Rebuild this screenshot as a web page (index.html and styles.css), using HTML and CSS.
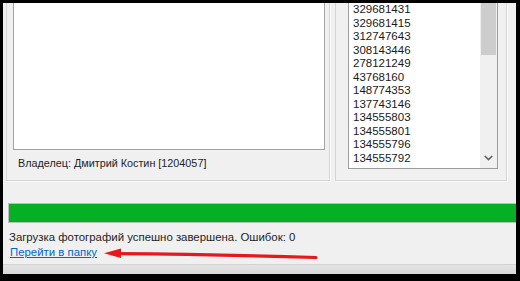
FILE: index.html
```html
<!DOCTYPE html>
<html lang="ru">
<head>
<meta charset="utf-8">
<title>Загрузка фотографий</title>
<link rel="stylesheet" href="styles.css">
</head>
<body>
<div class="screen">
  <div class="window">
    <div class="top">
      <section class="group group-left">
        <div class="textbox"></div>
        <div class="owner">Владелец: Дмитрий Костин [1204057]</div>
      </section>
      <section class="group group-right">
        <div class="listbox">
          <ul class="items">
            <li>329681431</li>
            <li>329681415</li>
            <li>312747643</li>
            <li>308143446</li>
            <li>278121249</li>
            <li>43768160</li>
            <li>148774353</li>
            <li>137743146</li>
            <li>134555803</li>
            <li>134555801</li>
            <li>134555796</li>
            <li>134555792</li>
          </ul>
          <div class="scrollbar">
            <div class="thumb"></div>
            <div class="track"></div>
            <div class="down">
              <svg width="9" height="6" viewBox="0 0 9 6"><path d="M0.8 1 L4.5 4.6 L8.2 1" fill="none" stroke="#606060" stroke-width="1.6"/></svg>
            </div>
          </div>
        </div>
      </section>
    </div>
    <div class="progress"><div class="fill" style="width:100%"></div></div>
    <div class="status">Загрузка фотографий успешно завершена. Ошибок: 0</div>
    <a class="link" href="#">Перейти в папку</a>
    <div class="bottom-edge"></div>
  </div>
  <svg class="arrow" width="520" height="281" viewBox="0 0 520 281">
    <path d="M316 257.5 Q220 254.5 116 253.6" fill="none" stroke="#e4191c" stroke-width="3.2" stroke-linecap="round"/>
    <polygon points="104,253.3 121,248.6 121,258" fill="#e4191c"/>
  </svg>
</div>
</body>
</html>
```
FILE: styles.css
```css
* { box-sizing: border-box; }
html, body { margin: 0; padding: 0; }
body {
  background: #000;
  width: 520px;
  height: 281px;
  overflow: hidden;
  font-family: "Liberation Sans", Arial, sans-serif;
}
.screen {
  position: relative;
  width: 520px;
  height: 281px;
  padding: 3px 4px 7px 3px;
}
.window {
  height: 100%;
  background: #f0f0f0;
  overflow: hidden;
  display: flex;
  flex-direction: column;
}
.top {
  display: flex;
  gap: 5px;
  padding-left: 3px;
  height: 178px;
  flex: none;
}
.group {
  border: 1px solid #d6d6d6;
  border-top: none;
  box-shadow: 1px 1px 0 #fbfbfb;
}
.group-left {
  width: 324px;
  padding: 0 4px 0 6px;
  display: flex;
  flex-direction: column;
}
.textbox {
  height: 147px;
  background: #fff;
  border: 1px solid #a2a2a2;
  border-top: none;
  flex: none;
}
.owner {
  margin: 6px 0 0 5px;
  font-size: 10.8px;
  line-height: 14px;
  color: #1e1e1e;
  white-space: nowrap;
}
.group-right {
  width: 172px;
  padding: 0 8px 0 12px;
}
.listbox {
  height: 166px;
  background: #fff;
  border: 1px solid #9c9c9c;
  border-top: none;
  display: flex;
}
.items {
  flex: 1;
  list-style: none;
  margin: 0;
  padding: 0 0 0 4px;
  font-size: 11.5px;
  line-height: 13.5px;
  color: #1a1a1a;
}
.scrollbar {
  width: 17px;
  background: #f0f0f0;
  display: flex;
  flex-direction: column;
}
.thumb {
  height: 52px;
  margin: 0 1px;
  background: #cdcdcd;
}
.track { flex: 1; }
.down {
  height: 17px;
  display: flex;
  align-items: center;
  justify-content: center;
  padding-bottom: 3px;
}
.progress {
  margin: 22px -20px 0 5px;
  height: 20px;
  border: 1px solid #bcbcbc;
  background: #e6e6e6;
  flex: none;
}
.fill {
  height: 100%;
  background: #06b025;
}
.status {
  margin: 7px 0 0 6px;
  font-size: 11.4px;
  line-height: 15px;
  color: #1e1e1e;
  white-space: nowrap;
}
.link {
  align-self: flex-start;
  margin-left: 7px;
  font-size: 11.4px;
  line-height: 15px;
  color: #0066cc;
  text-decoration: underline;
  white-space: nowrap;
}
.bottom-edge {
  margin-top: auto;
  height: 10px;
  border-top: 1px solid #d2d2d2;
  background: linear-gradient(#e4e4e4, #d8d8d8);
  flex: none;
}
.arrow {
  position: absolute;
  left: 0;
  top: 0;
  pointer-events: none;
}
```
